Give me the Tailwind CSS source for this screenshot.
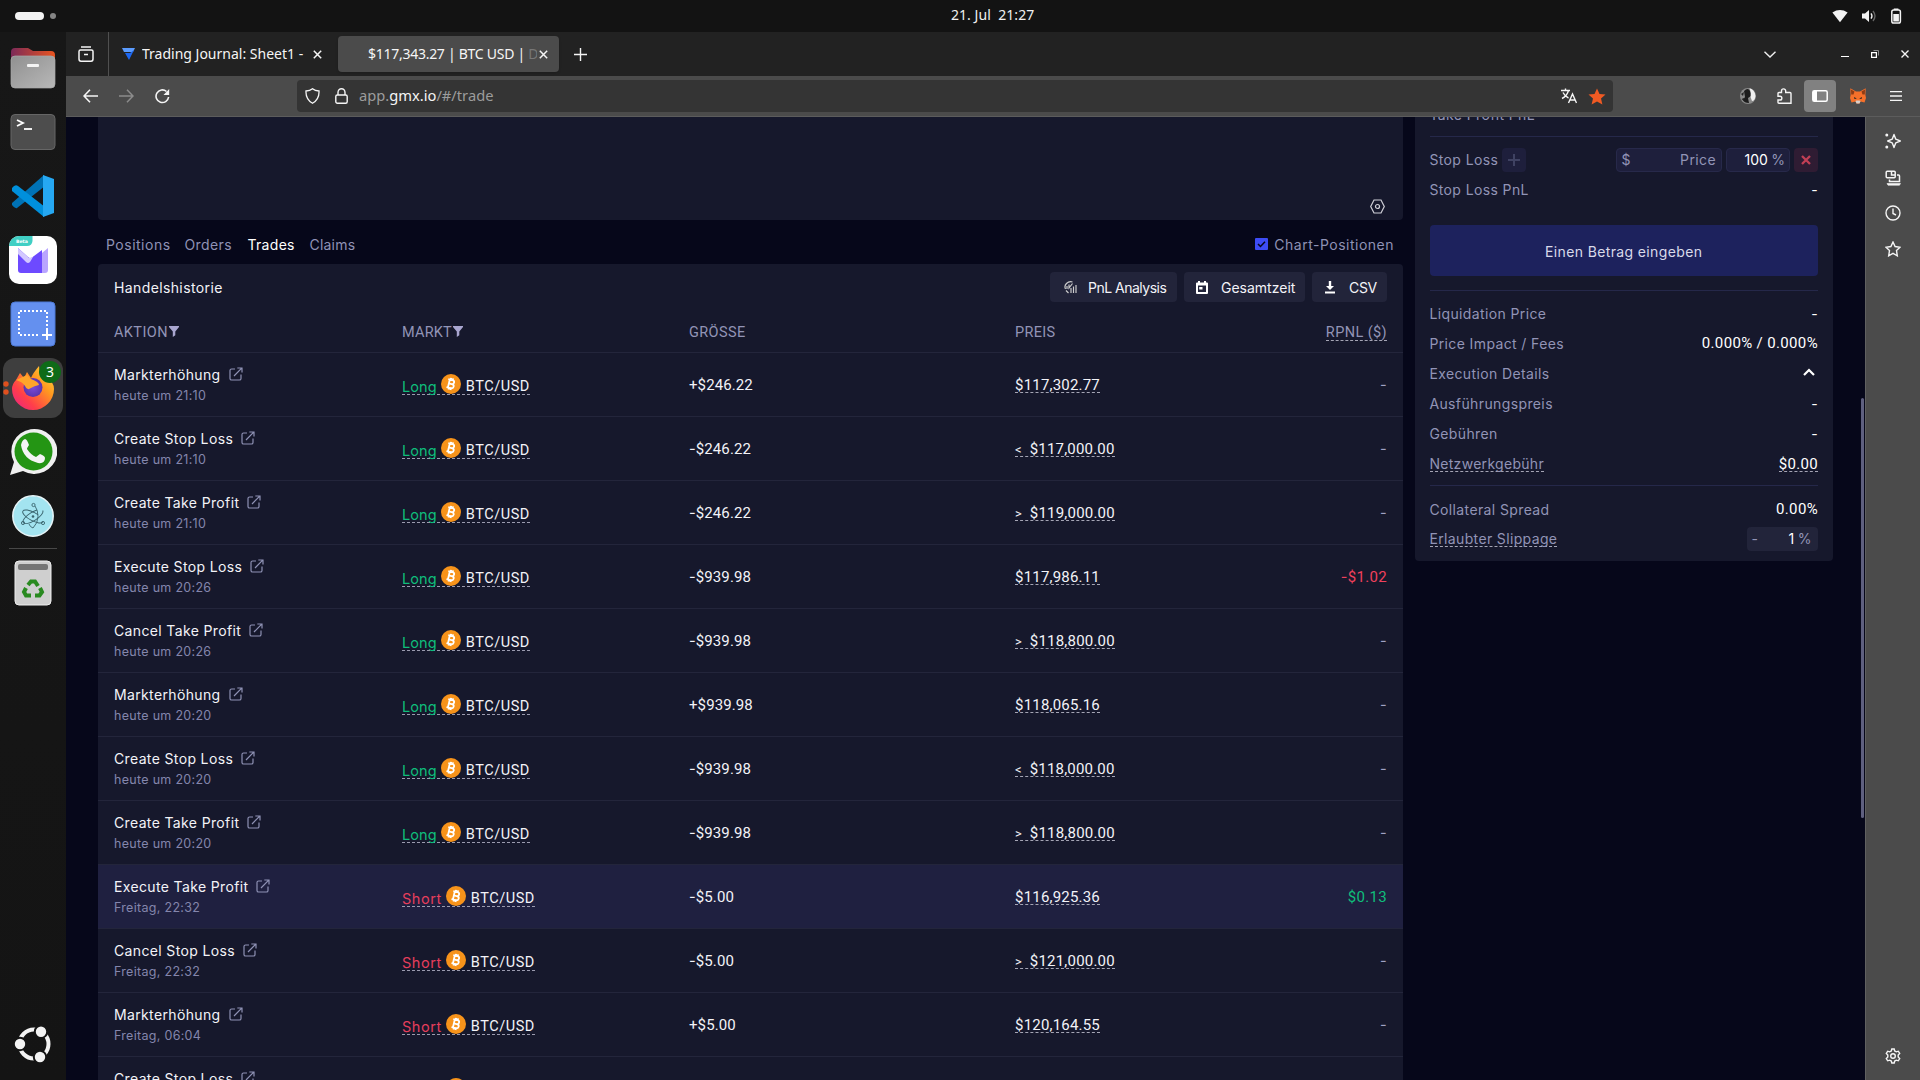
<!DOCTYPE html>
<html lang="de">
<head>
<meta charset="utf-8">
<title>Trade</title>
<script src="https://cdn.jsdelivr.net/npm/@tailwindcss/browser@4"></script>
</head>
<body class="w-[1920px] h-[1080px] overflow-hidden bg-[#131313] flex flex-col text-white">
<svg class="hidden">
  <symbol id="ext" viewBox="0 0 14 14"><path d="M6 2H2.6Q1 2 1 3.6V11.4Q1 13 2.6 13H10.4Q12 13 12 11.4V7.5M5 9L12.7 1.2M8.3 1H13V5.6" fill="none" stroke="currentColor" stroke-width="1.2"/></symbol>
  <symbol id="btc" viewBox="0 0 20 20"><circle cx="10" cy="10" r="10" fill="#f7931a"/><path transform="rotate(13 10 10)" d="M7.8 5.9V14.1M6.3 5.9H10.6Q12.7 5.9 12.7 7.9T10.6 9.9H7.8M10.8 9.9Q13.2 9.9 13.2 12T10.8 14.1H6.3M8.8 4V6M10.8 4V6M8.8 14V16M10.8 14V16" fill="none" stroke="#fff" stroke-width="1.8"/></symbol>
  <symbol id="filter" viewBox="0 0 10 11"><path d="M0 0H10V1L6.3 5.4V9.2L3.8 11V5.4L0 1Z" fill="currentColor"/></symbol>
</svg>

<header class="h-8 shrink-0 flex items-center relative">
  <div class="ml-[15px] w-[29px] h-[8px] rounded-full bg-[#f3f3f3]"></div>
  <div class="ml-[6px] w-[6px] h-[6px] rounded-full bg-[#858585]"></div>
  <div class="absolute left-[951px] top-[5px] text-[14px] leading-[20px] font-['Noto_Sans',sans-serif] text-[#f0f0f0] whitespace-pre tracking-[0.05px]">21. Jul  21:27</div>
  <div class="ml-auto mr-[18px] flex items-center gap-[13px] text-[#f3f3f3]">
    <svg class="w-4 h-4" viewBox="0 0 16 16"><path d="M.4 4.4Q8 -.2 15.6 4.4L8 14.2Z" fill="currentColor"/></svg>
    <svg class="w-4 h-4" viewBox="0 0 16 16"><path d="M1 5.5H4L8 2V14L4 10.5H1Z" fill="currentColor"/><path d="M10 5.3Q12 8 10 10.7" fill="none" stroke="currentColor" stroke-width="1.3"/><path d="M12 3Q16 8 12 13" fill="none" stroke="#666" stroke-width="1.3"/></svg>
    <svg class="w-3 h-4" viewBox="0 0 12 16"><rect x="1.8" y="2" width="8.6" height="13" rx="1.8" fill="none" stroke="currentColor" stroke-width="1.5"/><path d="M3.8 .6H8.4V2H3.8ZM3.3 6H8.9V13.5H3.3Z" fill="currentColor"/></svg>
  </div>
</header>

<div class="flex flex-1 min-h-0">
<aside class="w-[66px] shrink-0 bg-gradient-to-b from-[#171717] to-[#141414] flex flex-col items-center">
  <svg class="mt-[15px] w-[46px] h-[42px] shrink-0" viewBox="0 0 46 42"><defs><linearGradient id="fo"><stop offset="0" stop-color="#7c2a58"/><stop offset="1" stop-color="#e95420"/></linearGradient><linearGradient id="fg" x2="1" y2="1"><stop offset="0" stop-color="#909090"/><stop offset="1" stop-color="#b8b8b8"/></linearGradient></defs><path d="M1 18V5Q1 1 5 1H18L23 4H41Q45 4 45 8V18Z" fill="url(#fo)"/><rect x="1" y="9" width="44" height="32" rx="4" fill="url(#fg)" stroke="#aaa" stroke-width=".7"/><rect x="17" y="17" width="12" height="3" rx="1" fill="#f4f4f4"/></svg>
  <svg class="mt-[24px] w-[46px] h-[38px] shrink-0" viewBox="0 0 46 38"><rect x="1" y="1.5" width="44" height="35" rx="4" fill="#4d4d4d" stroke="#666"/><path d="M7 7L13 10L7 13" fill="none" stroke="#fff" stroke-width="1.8"/><path d="M14 16H22" stroke="#fff" stroke-width="1.8"/></svg>
  <svg class="mt-[23px] w-[44px] h-[44px] shrink-0" viewBox="0 0 44 44"><path d="M1 29L33 1L34 12L6 34Q4 35 1 31Z" fill="#0072b5"/><path d="M1 14Q4 10 7 12L34 33L33 43L1 17Z" fill="#0090dc"/><path d="M32 1L43 5V39L32 43Z" fill="#26a8f2"/></svg>
  <svg class="mt-[18px] w-[48px] h-[48px] shrink-0" viewBox="0 0 48 48"><defs><clipPath id="pm"><rect width="48" height="48" rx="10"/></clipPath></defs><rect width="48" height="48" rx="10" fill="#fff"/><path clip-path="url(#pm)" d="M0 0H23.500V5Q23 10 18 10H0Z" fill="#40cfc4"/><text x="7" y="7" font-family="DejaVu Sans" font-weight="bold" font-size="4.600" fill="#fff">Beta</text><path d="M9 12L19 21Q21 23 23 21.500L33 14V37H12Q9 37 9 34Z" fill="#6d4aff"/><path d="M9 12L20 22L24 21L21 26Q19 28 17 26L9 18Z" fill="#d3c8ff"/><path d="M33 17L39 12V34Q39 37 36 37H33Z" fill="#b9a5ff"/></svg>
  <svg class="mt-[17px] w-[46px] h-[46px] shrink-0" viewBox="0 0 46 46"><rect x="1" y="1" width="44" height="44" rx="4" fill="#6490ef" stroke="#4c78d5"/><path d="M37 29V10H9V34H30" fill="none" stroke="#fff" stroke-width="2" stroke-dasharray="2 2"/><path d="M37 29V39M32 34H42" stroke="#fff" stroke-width="2"/></svg>
  <div class="mt-[11px] w-[60px] h-[60px] shrink-0 rounded-xl bg-[#3e3e3e] relative">
    <svg class="w-[60px] h-[60px]" viewBox="0 0 60 60"><defs><linearGradient id="ff" x1="1" x2="0" y2="1"><stop offset="0" stop-color="#ffe14a"/><stop offset=".35" stop-color="#ff9a1f"/><stop offset=".7" stop-color="#ff3e4a"/><stop offset="1" stop-color="#e6208c"/></linearGradient><radialGradient id="fp"><stop offset="0" stop-color="#7a4bd8"/><stop offset="1" stop-color="#5a35ad"/></radialGradient></defs><circle cx="3" cy="26" r="2.700" fill="#e0501e"/><circle cx="3" cy="34" r="2.700" fill="#e0501e"/><path d="M13 22L17 15L21 20L24 14L28 20Q30 15 36 8Q36 14 42 17Q51 24 51 31A21 21 0 0 1 9 31Q9 26 13 22Z" fill="url(#ff)"/><circle cx="30" cy="29.500" r="9.500" fill="url(#fp)"/><path d="M13 22L24 17L28 21Q36 24 36 27Q31 28 28 30Q24 33 22 28Q20 24 13 22Z" fill="#ffa52a"/></svg>
    <div class="absolute left-[36px] top-[3px] w-[22px] h-[22px] rounded-full bg-[#0e6b18] text-center text-[14px] leading-[22px] font-['Noto_Sans',sans-serif]">3</div>
  </div>
  <svg class="mt-[10px] w-[48px] h-[48px] shrink-0" viewBox="0 0 48 48"><path d="M1 47L5 34A23 22.500 0 1 1 14 43Z" fill="#f0f0f0"/><circle cx="24.500" cy="23.500" r="19" fill="#249514"/><path d="M16 11Q18 11 20 17Q18 20 18 21Q22 27 27 29L31 26Q36 28 36 30Q36 36 29 35Q14 31 12 17Q13 12 16 11Z" fill="#f4f4f4"/></svg>
  <svg class="mt-[19px] w-[42px] h-[42px] shrink-0" viewBox="0 0 42 42"><circle cx="21" cy="21" r="20.200" fill="#a3e4f0" stroke="#e6f4f7" stroke-width="1.500"/><g fill="none" stroke="#39636d" stroke-width=".9"><ellipse cx="21" cy="21.500" rx="11.500" ry="4.200" transform="rotate(28 21 21.500)" pathLength="100" stroke-dasharray="82 18"/><ellipse cx="21" cy="21.500" rx="11.500" ry="4.200" transform="rotate(-32 21 21.500)" pathLength="100" stroke-dasharray="88 12"/><path d="M23 11Q26 15 26 21.500T21 33Q18 32 17 29"/><circle cx="21.500" cy="10" r="1.600"/><circle cx="11" cy="28" r="1.600"/><circle cx="31" cy="28" r="1.600"/></g><circle cx="21" cy="21.500" r="1.300" fill="#39636d"/></svg>
  <div class="mt-[11px] w-[48px] h-px bg-[#484848] shrink-0"></div>
  <svg class="mt-[11px] w-[38px] h-[46px] shrink-0" viewBox="0 0 38 46"><rect x="1" y="1" width="36" height="44" rx="4" fill="#cfcfcf" stroke="#eee"/><rect x="4" y="4" width="30" height="6" rx="2" fill="#757575"/><g fill="none" stroke="#298a20" stroke-width="4"><path d="M14 25L17 21.500H21L24 26"/><path d="M26 28L28 32L25.500 35.500H21"/><path d="M17 35.500H12L10 32L12 28"/></g></svg>
  <svg class="mt-auto mb-[17px] w-[38px] h-[38px] shrink-0" viewBox="0 0 38 38"><circle cx="20" cy="19" r="14.500" fill="none" stroke="#f3f3f3" stroke-width="4"/><g fill="#f3f3f3" stroke="#151515" stroke-width="2"><circle cx="6" cy="19" r="6.200"/><circle cx="27" cy="6.700" r="6.200"/><circle cx="26" cy="32" r="6.200"/></g></svg>
</aside>

<div class="flex-1 flex flex-col min-w-0">
  <div class="h-11 shrink-0 bg-[#222] flex items-center font-['Noto_Sans',sans-serif] text-[14px] text-[#f5f5f5]">
    <div class="w-[43px] h-full border-r border-[#505050] flex items-center justify-center shrink-0 pr-[2px]">
      <svg class="w-4 h-4" viewBox="0 0 16 16" fill="none" stroke="#f5f5f5" stroke-width="1.500"><path d="M3 1H13M2.500 4H13.500Q15 4 15 5.500V13Q15 15.200 13 15.200H3Q1 15.200 1 13V5.500Q1 4 2.500 4ZM6 8.500H10"/></svg>
    </div>
    <svg class="ml-[13px] w-[13px] h-3 shrink-0" viewBox="0 0 13 12"><path d="M0 0H13L11 4H2Z" fill="#5b9cff"/><path d="M3 5H8L12 2L7 12Z" fill="#1c66f0"/></svg>
    <div class="ml-[7px] mb-px w-[167px] overflow-hidden whitespace-pre shrink-0">Trading Journal: Sheet1 - </div>
    <svg class="ml-[4px] w-[9px] h-[9px] shrink-0" viewBox="0 0 9 9"><path d="M.8 .8L8.200 8.200M8.200 .8L.8 8.200" stroke="#f5f5f5" stroke-width="1.500"/></svg>
    <div class="ml-[16px] w-[221px] h-9 rounded bg-[#4b4b4b] shadow shrink-0 flex items-center pl-[30px]">
      <div class="w-[169px] mb-px overflow-hidden whitespace-pre shrink-0 tracking-[-0.27px]">$117,343.27 | BTC USD | <span class="text-[#777]">D</span></div>
      <svg class="w-[9px] h-[9px] shrink-0 ml-[2px]" viewBox="0 0 9 9"><path d="M.8 .8L8.200 8.200M8.200 .8L.8 8.200" stroke="#f5f5f5" stroke-width="1.500"/></svg>
    </div>
    <svg class="ml-[15px] w-[13px] h-[13px]" viewBox="0 0 13 13"><path d="M6.500 0V13M0 6.500H13" stroke="#f5f5f5" stroke-width="1.400"/></svg>
    <svg class="ml-auto w-[12px] h-[7px]" viewBox="0 0 12 7"><path d="M.5 .7L6 6L11.500 .7" stroke="#eee" stroke-width="1.400" fill="none"/></svg>
    <div class="ml-[65px] mt-[5px] w-[8px] h-px bg-white"></div>
    <svg class="ml-[22px] w-[8px] h-[8px]" viewBox="0 0 8 8"><path d="M.6 2.600H5.400V7.400H.6Z" stroke="#fff" stroke-width="1.200" fill="none"/><path d="M2.500 .5H7.500V5.500" stroke="#888" fill="none"/></svg>
    <svg class="ml-[22px] mr-[11px] w-[8px] h-[8px]" viewBox="0 0 8 8"><path d="M.5 .5L7.500 7.500M7.500 .5L.5 7.500" stroke="#f5f5f5" stroke-width="1.400"/></svg>
  </div>

  <div class="h-[41px] shrink-0 bg-[#4b4b4b] border-b border-[#5c5c5c] flex items-center text-[#f5f5f5]">
    <svg class="ml-[17px] w-[15px] h-[14px]" viewBox="0 0 15 14"><path d="M7 .7L1 7L7 13.300M1 7H15" fill="none" stroke="currentColor" stroke-width="1.600"/></svg>
    <svg class="ml-[21px] w-[15px] h-[14px] text-[#8c8c8c]" viewBox="0 0 15 14"><path d="M8 .7L14 7L8 13.300M14 7H0" fill="none" stroke="currentColor" stroke-width="1.500"/></svg>
    <svg class="ml-[21px] w-[15px] h-[15px]" viewBox="0 0 15 15"><path d="M11.500 2.500A6.300 6.300 0 1 0 13.600 8" fill="none" stroke="currentColor" stroke-width="1.600"/><path d="M14.200 0V6H8.500Z" fill="currentColor"/></svg>
    <div class="ml-[127px] w-[1316px] h-8 rounded bg-[#343434] flex items-center">
      <svg class="ml-[8px] w-[15px] h-4" viewBox="0 0 15 16"><path d="M7.500 .7Q10 3 14 3Q14.500 11.500 7.500 15.300Q.5 11.500 1 3Q5 3 7.500 .7Z" fill="none" stroke="currentColor" stroke-width="1.300"/></svg>
      <svg class="ml-[15px] w-[13px] h-4" viewBox="0 0 13 16"><rect x=".8" y="7" width="11.400" height="8.200" rx="1.500" fill="none" stroke="currentColor" stroke-width="1.400"/><path d="M3 7V4.500A3.500 3.800 0 0 1 10 4.500V7" fill="none" stroke="currentColor" stroke-width="1.400"/></svg>
      <div class="ml-[11px] mb-[2px] text-[14.7px] font-['Noto_Sans',sans-serif] text-[#9c9c9c]">app.<span class="text-[#f5f5f5]">gmx.io</span>/#/trade</div>
      <svg class="ml-auto w-4 h-4" viewBox="0 0 16 16" fill="none" stroke="currentColor" stroke-width="1.400"><path d="M0 2.500H9M4.500 .5V2.500M7.500 2.500Q6 8 1 10.500M2 4.500Q4 8.500 7.500 10M7.500 15L11.500 6L15.500 15M9 12H14"/></svg>
      <svg class="ml-[11px] mr-[7px] w-[18px] h-[17px]" viewBox="0 0 18 17"><path d="M9 .5L11.500 6L17.500 6.600L13 10.600L14.400 16.500L9 13.400L3.600 16.500L5 10.600L.5 6.600L6.500 6Z" fill="#f05a23"/></svg>
    </div>
    <svg class="ml-auto w-4 h-4" viewBox="0 0 16 16"><circle cx="8" cy="8" r="8" fill="#8a8a8a"/><path d="M4 3Q8 -1 10 3L11 8L8 10L9 15Q4 15 3 12L5 9Z" fill="#1c1c1c"/><path d="M9.500 .3Q15 2 15.500 8Q15 13 12 13L10.500 9L11 5Z" fill="#f0f0f0"/><path d="M1 6L4 4L3 8ZM1.500 11L4 10L4 13Z" fill="#222"/></svg>
    <svg class="ml-[21px] w-[15px] h-4" viewBox="0 0 15 16"><path d="M1 7V5.500Q1 4.500 2 4.500H4.500V3A2 2 0 0 1 8.700 3V4.500H13Q14 4.500 14 5.500V15.200H2Q1 15.200 1 14.200V12H3A1.800 1.800 0 0 0 3 8.300H1Z" fill="none" stroke="currentColor" stroke-width="1.400"/></svg>
    <div class="ml-[12px] w-8 h-8 rounded bg-[#818181] flex items-center justify-center"><svg class="w-4 h-3" viewBox="0 0 16 12"><rect x=".8" y=".8" width="14.400" height="10.400" rx="1.500" fill="none" stroke="#fff" stroke-width="1.500"/><path d="M1 1H5V11H1Z" fill="#fff"/></svg></div>
    <svg class="ml-[14px] w-4 h-4" viewBox="0 0 16 16"><path d="M.3 .3L6 3.500H10L15.700 .3L15.400 7L16 10L14.500 14.500L10.500 13.500L9.500 15.500H6.500L5.500 13.500L1.500 14.500L0 10L.6 7Z" fill="#f5702a"/><path d="M1 1.500L4.500 3.600L3.500 6.500H1.200ZM15 1.500L11.500 3.600L12.500 6.500H14.800Z" fill="#8f3c14"/><path d="M4 9L6.800 10.500L4.500 11ZM12 9L9.200 10.500L11.500 11Z" fill="#222"/><path d="M5.500 13L6.500 12.500H9.500L10.500 13L9.500 15.500H6.500Z" fill="#d6d0cc"/></svg>
    <svg class="ml-[24px] mr-[18px] w-3 h-[10px]" viewBox="0 0 12 10"><path d="M0 .7H12M0 5H12M0 9.300H12" stroke="currentColor" stroke-width="1.300"/></svg>
  </div>

  <div class="flex-1 flex min-h-0">
    <main class="flex-1 min-w-0 bg-[#06071a] flex pl-8 font-[Roboto,sans-serif] text-[15px] overflow-hidden relative">
      <div class="w-[1305px] shrink-0 flex flex-col">
        <div class="h-[103px] shrink-0 rounded-b bg-[#16182c] flex justify-end items-end pr-[18px] pb-[6px]">
          <svg class="w-[15px] h-[15px]" viewBox="0 0 15 15" fill="none" stroke="#d0d0d8" stroke-width="1.200"><path d="M4 1H11L14.300 7.500L11 14H4L.7 7.500Z"/><circle cx="7.500" cy="7.500" r="2"/></svg>
        </div>
        <div class="h-[44px] shrink-0 flex items-center pt-[5px] pl-[8px] pr-[9px] gap-[16px] text-[#8f92b5] text-[14px] font-[Inter,sans-serif]">
          <div class="w-[62.5px] tracking-[0.5px] whitespace-nowrap">Positions</div><div class="w-[47px] tracking-[0.4px] whitespace-nowrap">Orders</div><div class="w-[46px] tracking-[0.3px] whitespace-nowrap text-white">Trades</div><div class="tracking-[0.2px]">Claims</div>
          <div class="ml-auto flex items-center gap-[6px]">
            <svg class="w-[13px] h-[12px] -mt-[2px]" viewBox="0 0 13 12"><rect width="13" height="12" rx="1" fill="#3d4cf5"/><path d="M3 6L5.500 8.500L10 3.800" stroke="#06071a" stroke-width="1.500" fill="none"/></svg>
            <div class="tracking-[0.5px] whitespace-nowrap">Chart-Positionen</div>
          </div>
        </div>
        <section class="flex-1 rounded-t bg-[#16182c] overflow-hidden">
          <div class="h-[46px] flex items-center pl-4 pr-4 font-[Inter,sans-serif] text-[14px] text-[#f3f3f8]">
            <div class="tracking-[0.38px] mt-px">Handelshistorie</div>
            <div class="ml-auto flex gap-[7px] [&>div]:h-[30px] [&>div]:rounded [&>div]:bg-[#22243a] [&>div]:flex [&>div]:items-center [&>div]:whitespace-nowrap [&>div]:pt-px">
              <div class="w-[127px] tracking-[-0.5px]"><svg class="ml-[14px] mr-[11px] w-[13px] h-[13px] shrink-0" viewBox="0 0 13 13" fill="none" stroke="#ccc" stroke-width="1.200"><path d="M8.500 1Q5 0 2.500 2.500T1.500 8M3 5V8M5 3.500V7L8.500 2.500M7 7V12M9.500 5.500V12M12 4V12M2 9.500L4.500 12"/></svg>PnL Analysis</div>
              <div class="w-[121px]"><svg class="ml-[12px] mr-[13px] w-[12px] h-[13px] shrink-0" viewBox="0 0 12 13"><path d="M2 0H4V1.500H8V0H10V1.500H11Q12 1.500 12 2.500V12Q12 13 11 13H1Q0 13 0 12V2.500Q0 1.500 1 1.500H2Z" fill="#fff"/><path d="M2 4.500H10V11H2Z" fill="#22243a"/><path d="M3.200 6H6.500V8.500H3.200Z" fill="#fff"/></svg>Gesamtzeit</div>
              <div class="w-[75px] tracking-[-0.3px]"><svg class="ml-[13px] mr-[14px] w-[10px] h-[13px] shrink-0" viewBox="0 0 10 13"><path d="M3.800 0H6.200V5H9L5 9L1 5H3.800ZM0 10.500H10V12.500H0Z" fill="#fff"/></svg>CSV</div>
            </div>
          </div>
          <div class="h-[43px] grid grid-cols-[288px_287px_326px_1fr] items-center pl-4 pr-4 pt-1 border-b border-[#23253b] text-[14.5px] text-[#9294b6]">
            <div class="flex items-center gap-px tracking-[0.4px]">AKTION<svg class="w-[10px] h-[11px] -mt-[3px] text-[#a9a6d0]"><use href="#filter"/></svg></div>
            <div class="flex items-center gap-px tracking-[0.2px]">MARKT<svg class="w-[10px] h-[11px] -mt-[3px] text-[#a9a6d0]"><use href="#filter"/></svg></div>
            <div class="tracking-[0.4px]">GRÖSSE</div>
            <div class="flex justify-between items-center"><span class="tracking-[0.3px]">PREIS</span><span class="tracking-[0.4px] leading-[14px] border-b border-dashed border-[#a5a5b5]">RPNL ($)</span></div>
          </div>
          <div id="rows"></div>
        </section>
      </div>

      <section class="ml-3 w-[418px] h-[444px] rounded-b bg-[#16182c] px-[15px] flex flex-col text-[#9294b6] font-[Inter,sans-serif] text-[14px] tracking-[0.38px] indent-[-0.6px] overflow-hidden">
        <div class="h-[19px] shrink-0 relative"><span class="absolute left-0 top-[-13px] whitespace-nowrap">Take Profit PnL</span></div>
        <div class="h-px shrink-0 bg-[#25284a]"></div>
        <div class="h-[45px] shrink-0 flex items-center">Stop Loss
          <div class="ml-[4px] w-6 h-6 rounded bg-[#1e1f3c] flex items-center justify-center"><svg class="w-3 h-3" viewBox="0 0 12 12"><path d="M6 0V12M0 6H12" stroke="#3f4262" stroke-width="2"/></svg></div>
          <div class="ml-auto w-[106px] h-6 rounded bg-[#1e1f3c] border border-[#27294a] flex items-center justify-between px-[5px]"><span>$</span><span>Price</span></div>
          <div class="ml-1 w-[64px] h-6 rounded bg-[#1e1f3c] border border-[#27294a] flex items-center justify-end pr-1 gap-1 tracking-normal"><span class="text-white">100</span><span>%</span></div>
          <div class="ml-1 w-6 h-6 rounded bg-[#2f1c33] flex items-center justify-center"><svg class="w-[10px] h-[10px]" viewBox="0 0 10 10"><path d="M1 1L9 9M9 1L1 9" stroke="#c23f55" stroke-width="2.300"/></svg></div>
        </div>
        <div class="h-[15px] shrink-0 flex items-center justify-between">Stop Loss PnL<span class="text-white">-</span></div>
        <div class="mt-[28px] h-[51px] shrink-0 rounded bg-[#1d225d] text-[#d9daea] flex items-center justify-center pt-[2px] tracking-[0.37px]">Einen Betrag eingeben</div>
        <div class="mt-[14px] h-px shrink-0 bg-[#25284a]"></div>
        <div class="mt-[7px] [&>div]:h-[30px] [&>div]:flex [&>div]:items-center [&>div]:justify-between [&_b]:font-normal [&_b]:text-white">
          <div>Liquidation Price<b>-</b></div>
          <div>Price Impact / Fees<b class="font-[Roboto,sans-serif] text-[15px] tracking-[0.35px]">0.000% / 0.000%</b></div>
          <div>Execution Details<svg class="mr-[3px] w-[12px] h-[8px] -mt-[3px]" viewBox="0 0 12 8"><path d="M1 7L6 2L11 7" stroke="#fff" stroke-width="2.200" fill="none"/></svg></div>
          <div>Ausführungspreis<b>-</b></div>
          <div>Gebühren<b>-</b></div>
          <div class="pt-[2px]"><span class="leading-[14px] border-b border-dashed border-[#a5a5b5] tracking-[0.3px]">Netzwerkgebühr</span><b class="font-[Roboto,sans-serif] text-[15px] tracking-[0.3px] leading-[14px] border-b border-dashed border-[#a5a5b5]">$0.00</b></div>
        </div>
        <div class="mt-[7px] h-px shrink-0 bg-[#25284a]"></div>
        <div class="mt-[8px] h-[30px] shrink-0 flex items-center justify-between">Collateral Spread<span class="text-white font-[Roboto,sans-serif] text-[15px] tracking-[0.35px]">0.00%</span></div>
        <div class="h-[30px] shrink-0 flex items-center justify-between"><span class="leading-[14px] border-b border-dashed border-[#a5a5b5] tracking-[0.36px]">Erlaubter Slippage</span><div class="w-[71px] h-6 rounded bg-[#22243a] flex items-center pl-[5px] pr-[6px] mb-px"><span>-</span><span class="ml-auto mr-1 text-white">1</span>%</div></div>
      </section>
      <div class="absolute right-[1px] top-[281px] w-[3px] h-[420px] bg-[#5f6080] rounded-full"></div>
    </main>
    <aside class="w-[55px] shrink-0 bg-[#4b4b4b] border-l border-[#606060] flex flex-col items-center text-[#f5f5f5] py-4 [&>svg]:shrink-0 [&>svg]:fill-none [&>svg]:stroke-current">
      <svg class="w-4 h-4" viewBox="0 0 16 16" stroke-width="1.400"><path d="M9 1.500L10.800 6.200L15.300 8L10.800 9.800L9 14.500L7.200 9.800L2.700 8L7.200 6.200Z" stroke-linejoin="round"/><circle cx="1.800" cy="2" r=".8"/><circle cx="1.800" cy="14" r=".8"/></svg>
      <svg class="mt-[21px] w-4 h-4" viewBox="0 0 16 16" stroke-width="1.500"><rect x="1.200" y="1.200" width="9" height="6.500" rx="1"/><path d="M6.500 1.500V5H10M12 5H13.500Q14.500 5 14.500 6V11.500H4.500V9.500"/><path d="M2 13.500H15.500L14.500 15.200H3Z" fill="currentColor" stroke-width=".6"/></svg>
      <svg class="mt-[19px] w-4 h-4" viewBox="0 0 16 16" stroke-width="1.400"><circle cx="8" cy="8" r="7"/><path d="M8 3.500V8.500L11 10"/></svg>
      <svg class="mt-[20px] w-4 h-4" viewBox="0 0 16 16" stroke-width="1.400"><path d="M8 1L10.100 5.500L15 6.200L11.500 9.600L12.300 14.800L8 12.300L3.700 14.800L4.500 9.600L1 6.200L5.900 5.500Z"/></svg>
      <svg class="mt-auto w-4 h-4" viewBox="0 0 16 16" stroke-width="1.400"><circle cx="8" cy="8" r="2.300"/><path d="M6.800 1H9.200L9.700 3L11.300 3.800L13.300 3.200L14.700 5.400L13.200 7V9L14.700 10.600L13.300 12.800L11.300 12.200L9.700 13L9.200 15H6.800L6.300 13L4.700 12.200L2.700 12.800L1.300 10.600L2.800 9V7L1.300 5.400L2.700 3.200L4.700 3.800L6.300 3Z"/></svg>
    </aside>
  </div>
</div>
</div>

<script>
const trades = [
  ['Markterhöhung', 'heute um 21:10', 'Long', '+$246.22', '', '$117,302.77', '-'],
  ['Create Stop Loss', 'heute um 21:10', 'Long', '-$246.22', '<', '$117,000.00', '-'],
  ['Create Take Profit', 'heute um 21:10', 'Long', '-$246.22', '>', '$119,000.00', '-'],
  ['Execute Stop Loss', 'heute um 20:26', 'Long', '-$939.98', '', '$117,986.11', '-$1.02'],
  ['Cancel Take Profit', 'heute um 20:26', 'Long', '-$939.98', '>', '$118,800.00', '-'],
  ['Markterhöhung', 'heute um 20:20', 'Long', '+$939.98', '', '$118,065.16', '-'],
  ['Create Stop Loss', 'heute um 20:20', 'Long', '-$939.98', '<', '$118,000.00', '-'],
  ['Create Take Profit', 'heute um 20:20', 'Long', '-$939.98', '>', '$118,800.00', '-'],
  ['Execute Take Profit', 'Freitag, 22:32', 'Short', '-$5.00', '', '$116,925.36', '$0.13'],
  ['Cancel Stop Loss', 'Freitag, 22:32', 'Short', '-$5.00', '>', '$121,000.00', '-'],
  ['Markterhöhung', 'Freitag, 06:04', 'Short', '+$5.00', '', '$120,164.55', '-'],
  ['Create Stop Loss', 'Freitag, 06:04', 'Short', '-$5.00', '>', '$121,000.00', '-'],
];
const dash = s => s.replace('-', '<span class="font-[Inter,sans-serif] text-[14.5px] leading-none">-</span>');
document.getElementById('rows').innerHTML = trades.map(([action, time, side, size, op, price, pnl], i) => `
  <div class="h-16 border-b border-[#23253b] grid grid-cols-[288px_287px_326px_1fr] items-center px-4 whitespace-nowrap ${i === 8 ? 'bg-[#1f2040]' : ''}">
    <div class="font-[Inter,sans-serif]">
      <div class="flex items-center gap-[8px] text-[14px] leading-[21px] tracking-[0.36px] text-[#f3f3f8]">${action}<svg class="w-[14px] h-[14px] text-[#8f92b5]"><use href="#ext"/></svg></div>
      <div class="text-[12.5px] leading-[21px] tracking-[0.3px] text-[#8486ac]">${time}</div>
    </div>
    <div class="flex"><div class="h-[21px] flex items-end leading-[14px] text-[14.5px] border-b border-dashed border-[#9a9aae]">
      <span class="font-[Inter,sans-serif] ${side === 'Long' ? 'text-[#0fbe7b] tracking-[0.1px]' : 'text-[#e63e5c] tracking-[0.55px]'}">${side}</span>
      <svg class="ml-[4px] mr-[5px] w-5 h-5"><use href="#btc"/></svg><span class="text-[#f3f3f8] tracking-[0.55px]">BTC/USD</span></div></div>
    <div class="tracking-[0.1px] text-[#f3f3f8] pt-[2px]">${dash(size)}</div>
    <div class="flex justify-between items-center pt-px"><span class="leading-[14px] whitespace-pre text-[#f3f3f8] tracking-[0.2px] border-b border-dashed border-[#a5a5b5]">${op ? '<span class="text-[13px] leading-none">' + (op === '<' ? '&lt;' : '&gt;') + '</span>  ' : ''}${price}</span>
      <span class="tracking-[0.3px] ${pnl === '-' ? 'text-[#a0a2c4]' : pnl === '$0.13' ? 'text-[#0fbe7b]' : 'text-[#f0405c]'}">${dash(pnl)}</span></div>
  </div>`).join('');
</script>
</body>
</html>
